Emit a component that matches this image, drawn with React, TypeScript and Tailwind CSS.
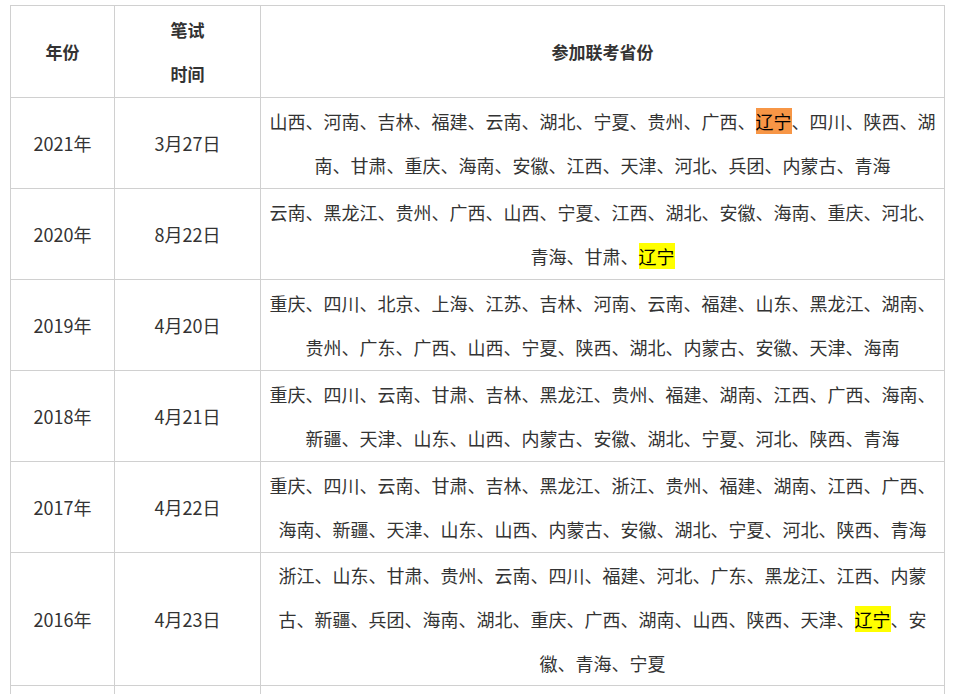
const rows: { year: string; date: string; parts: (string | { hl: string; bg: string })[] }[] = [
  { year: "2021年", date: "3月27日", parts: ["山西、河南、吉林、福建、云南、湖北、宁夏、贵州、广西、", { hl: "辽宁", bg: "bg-[#f79646]" }, "、四川、陕西、湖南、甘肃、重庆、海南、安徽、江西、天津、河北、兵团、内蒙古、青海"] },
  { year: "2020年", date: "8月22日", parts: ["云南、黑龙江、贵州、广西、山西、宁夏、江西、湖北、安徽、海南、重庆、河北、青海、甘肃、", { hl: "辽宁", bg: "bg-[#ffff00]" }] },
  { year: "2019年", date: "4月20日", parts: ["重庆、四川、北京、上海、江苏、吉林、河南、云南、福建、山东、黑龙江、湖南、贵州、广东、广西、山西、宁夏、陕西、湖北、内蒙古、安徽、天津、海南"] },
  { year: "2018年", date: "4月21日", parts: ["重庆、四川、云南、甘肃、吉林、黑龙江、贵州、福建、湖南、江西、广西、海南、新疆、天津、山东、山西、内蒙古、安徽、湖北、宁夏、河北、陕西、青海"] },
  { year: "2017年", date: "4月22日", parts: ["重庆、四川、云南、甘肃、吉林、黑龙江、浙江、贵州、福建、湖南、江西、广西、海南、新疆、天津、山东、山西、内蒙古、安徽、湖北、宁夏、河北、陕西、青海"] },
  { year: "2016年", date: "4月23日", parts: ["浙江、山东、甘肃、贵州、云南、四川、福建、河北、广东、黑龙江、江西、内蒙古、新疆、兵团、海南、湖北、重庆、广西、湖南、山西、陕西、天津、", { hl: "辽宁", bg: "bg-[#ffff00]" }, "、安徽、青海、宁夏"] },
  { year: "2015年", date: "4月25日", parts: [""] },
];

export default function App() {
  const cell = "border border-[#d0d0d0] px-[3px] py-0 text-center align-middle";
  return (
    <div className="bg-white min-h-screen pt-[5px] pl-[10px] text-[18px] leading-[44px] text-[#333]" style={{ fontFamily: '"Microsoft YaHei", "Noto Sans CJK SC", sans-serif' }}>
      <table className="border-collapse w-[935px] table-fixed">
        <colgroup>
          <col className="w-[104px]" />
          <col className="w-[146px]" />
          <col />
        </colgroup>
        <thead>
          <tr className="h-[92px] font-bold text-[17px]">
            <th className={cell}>年份</th>
            <th className={cell}>笔试<br />时间</th>
            <th className={cell}>参加联考省份</th>
          </tr>
        </thead>
        <tbody>
          {rows.map((r) => (
            <tr key={r.year} className="h-[91px]">
              <td className={cell}>{r.year}</td>
              <td className={cell}>{r.date}</td>
              <td className={cell}>
                {r.parts.map((p, i) =>
                  typeof p === "string" ? <span key={i}>{p}</span> : <span key={i} className={`${p.bg} text-black`}>{p.hl}</span>
                )}
              </td>
            </tr>
          ))}
        </tbody>
      </table>
    </div>
  );
}
